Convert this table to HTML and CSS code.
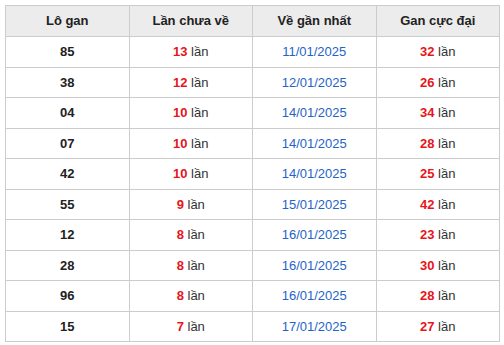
FILE: index.html
```html
<!DOCTYPE html>
<html lang="vi">
<head>
<meta charset="utf-8">
<link rel="stylesheet" href="styles.css">
</head>
<body>
<div class="wrap">
<table class="gan">
<thead>
<tr><th>Lô gan</th><th>Lần chưa về</th><th>Về gần nhất</th><th>Gan cực đại</th></tr>
</thead>
<tbody>
<tr><td class="num">85</td><td><b class="red">13</b> lần</td><td class="date">11/01/2025</td><td><b class="red">32</b> lần</td></tr>
<tr><td class="num">38</td><td><b class="red">12</b> lần</td><td class="date">12/01/2025</td><td><b class="red">26</b> lần</td></tr>
<tr><td class="num">04</td><td><b class="red">10</b> lần</td><td class="date">14/01/2025</td><td><b class="red">34</b> lần</td></tr>
<tr><td class="num">07</td><td><b class="red">10</b> lần</td><td class="date">14/01/2025</td><td><b class="red">28</b> lần</td></tr>
<tr><td class="num">42</td><td><b class="red">10</b> lần</td><td class="date">14/01/2025</td><td><b class="red">25</b> lần</td></tr>
<tr><td class="num">55</td><td><b class="red">9</b> lần</td><td class="date">15/01/2025</td><td><b class="red">42</b> lần</td></tr>
<tr><td class="num">12</td><td><b class="red">8</b> lần</td><td class="date">16/01/2025</td><td><b class="red">23</b> lần</td></tr>
<tr><td class="num">28</td><td><b class="red">8</b> lần</td><td class="date">16/01/2025</td><td><b class="red">30</b> lần</td></tr>
<tr><td class="num">96</td><td><b class="red">8</b> lần</td><td class="date">16/01/2025</td><td><b class="red">28</b> lần</td></tr>
<tr><td class="num">15</td><td><b class="red">7</b> lần</td><td class="date">17/01/2025</td><td><b class="red">27</b> lần</td></tr>
</tbody>
</table>
</div>
</body>
</html>
```
FILE: styles.css
```css
html, body {
  margin: 0;
  padding: 0;
  background: #fff;
}
.wrap {
  padding: 5px 4px 0 5px;
}
.gan {
  width: 100%;
  border-collapse: collapse;
  table-layout: fixed;
  font-family: "Liberation Sans", Arial, sans-serif;
  font-size: 13px;
  color: #333;
}
.gan th, .gan td {
  border: 1px solid #cccccc;
  text-align: center;
  padding: 7px 4px;
}
.gan th {
  background: #ececec;
  font-weight: bold;
  line-height: 16px;
  color: #222;
}
.gan td {
  line-height: 15.5px;
}
.num {
  font-weight: bold;
  color: #222;
}
.red {
  color: #e8141b;
  font-weight: bold;
}
.date {
  color: #1f64c8;
}
```
